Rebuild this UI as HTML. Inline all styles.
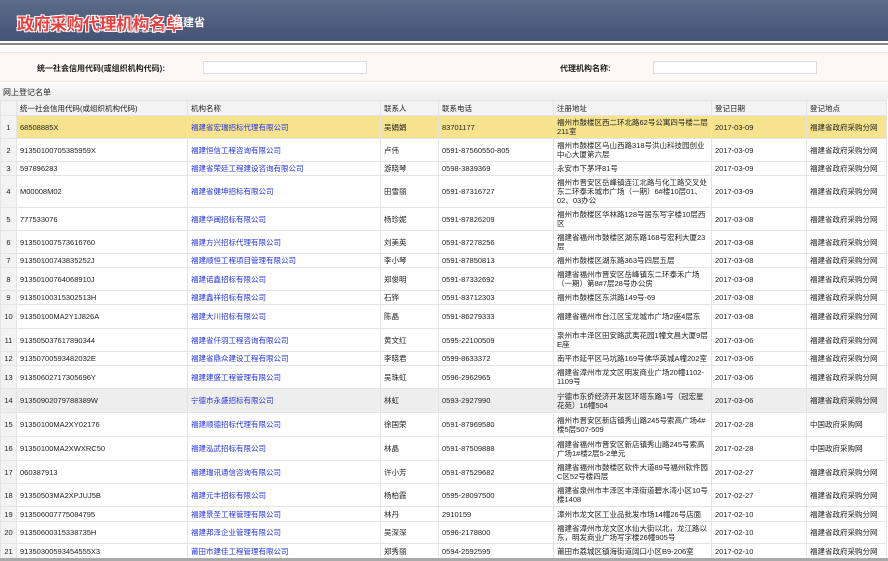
<!DOCTYPE html>
<html><head><meta charset="utf-8"><style>
*{margin:0;padding:0;box-sizing:border-box}
body{width:888px;height:561px;overflow:hidden;background:#fff;font-family:"Liberation Sans","Noto Sans CJK SC",sans-serif;font-size:7.5px;color:#222;position:relative}
.hdr{position:absolute;left:0;top:0;width:888px;height:41px;background:linear-gradient(#5d6b8a,#445274)}
.logo{position:absolute;left:17px;top:10px;font-size:17px;font-weight:bold;color:#e84040;letter-spacing:-0.5px;text-shadow:1px 1px 0 #fff,-1px -1px 0 #fff,1px -1px 0 #fff,-1px 1px 0 #fff}
.prov{position:absolute;left:172px;top:14px;font-size:11px;font-weight:bold;color:#fff}
.url{position:absolute;left:95px;top:28px;font-size:4px;color:#fff}
.line{position:absolute;left:0;top:43px;width:888px;height:2px;background:#888}
.search{position:absolute;left:0;top:52px;width:888px;height:30px;background:#fdf8f6;border-top:1px solid #f3e6e2;border-bottom:1px solid #f3e6e2}
.lbl{position:absolute;top:10px;font-weight:bold;font-size:8px}
.inp{position:absolute;top:8px;width:164px;height:13px;background:#fff;border:1px solid #ddd}
.cap{position:absolute;left:0;top:84px;width:888px;height:16px;background:linear-gradient(#fafafa,#eee);padding:3px 3px;font-size:8px}
table{position:absolute;left:0;top:100px;width:886px;border-collapse:collapse;table-layout:fixed}
td{border:1px solid #e4e4e4;padding:0 3px;vertical-align:middle;line-height:9px;overflow:hidden}
tr.h td{height:15px;background:#f3f3f3}
td.n{background:#f3f3f3;text-align:center;padding:0}
td a{color:#2233dd;text-decoration:none}
tr.y td{background:#f7e38e}
tr.y td.n{background:#f3f3f3}
tr.g td{background:#eee}
.bot{position:absolute;left:0;top:558px;width:888px;height:3px;background:#aaa}
</style></head><body>
<div class="hdr"><div class="logo">政府采购代理机构名单</div><div class="prov">福建省</div><div class="url">HTTP://WWW.CCGP.GOV.CN/AGENCY</div></div>
<div class="line"></div>
<div class="search"><span class="lbl" style="left:37px">统一社会信用代码(或组织机构代码):</span><div class="inp" style="left:203px"></div><span class="lbl" style="left:560px">代理机构名称:</span><div class="inp" style="left:653px"></div></div>
<div class="cap">网上登记名单</div>
<table>
<colgroup><col style="width:16px"><col style="width:171px"><col style="width:193px"><col style="width:58px"><col style="width:115px"><col style="width:158px"><col style="width:95px"><col style="width:80px"></colgroup>
<tr class="h"><td class="n"></td><td>统一社会信用代码(或组织机构代码)</td><td>机构名称</td><td>联系人</td><td>联系电话</td><td>注册地址</td><td>登记日期</td><td>登记地点</td></tr>
<tr class="y" style="height:23px"><td class="n">1</td><td>68508885X</td><td><a>福建省宏瑞招标代理有限公司</a></td><td>吴娟娟</td><td>83701177</td><td>福州市鼓楼区西二环北路62号公寓四号楼二层211室</td><td>2017-03-09</td><td>福建省政府采购分网</td></tr>
<tr style="height:23px"><td class="n">2</td><td>91350100705385959X</td><td><a>福建恒信工程咨询有限公司</a></td><td>卢伟</td><td>0591-87560550-805</td><td>福州市鼓楼区乌山西路318号洪山科技园创业中心大厦第六层</td><td>2017-03-09</td><td>福建省政府采购分网</td></tr>
<tr style="height:14px"><td class="n">3</td><td>597896283</td><td><a>福建省荣廷工程建设咨询有限公司</a></td><td>游晓琴</td><td>0598-3839369</td><td>永安市下茅坪81号</td><td>2017-03-09</td><td>福建省政府采购分网</td></tr>
<tr style="height:32px"><td class="n">4</td><td>M00008M02</td><td><a>福建省健坤招标有限公司</a></td><td>田雪丽</td><td>0591-87316727</td><td>福州市晋安区岳峰镇连江北路与化工路交叉处东二环泰禾城市广场（一期）6#楼10层01、02、03办公</td><td>2017-03-09</td><td>福建省政府采购分网</td></tr>
<tr style="height:23px"><td class="n">5</td><td>777533076</td><td><a>福建华闽招标有限公司</a></td><td>杨珍妮</td><td>0591-87826209</td><td>福州市鼓楼区华林路128号居东写字楼10层西区</td><td>2017-03-08</td><td>福建省政府采购分网</td></tr>
<tr style="height:23px"><td class="n">6</td><td>913501007573616760</td><td><a>福建方兴招标代理有限公司</a></td><td>刘美英</td><td>0591-87278256</td><td>福建省福州市鼓楼区湖东路168号宏利大厦23层</td><td>2017-03-08</td><td>福建省政府采购分网</td></tr>
<tr style="height:14px"><td class="n">7</td><td>91350100743835252J</td><td><a>福建顺恒工程项目管理有限公司</a></td><td>李小琴</td><td>0591-87850813</td><td>福州市鼓楼区湖东路363号四层五层</td><td>2017-03-08</td><td>福建省政府采购分网</td></tr>
<tr style="height:23px"><td class="n">8</td><td>91350100764068910J</td><td><a>福建诺鑫招标有限公司</a></td><td>郑俊明</td><td>0591-87332692</td><td>福建省福州市晋安区岳峰镇东二环泰禾广场（一期）第8#7层28号办公房</td><td>2017-03-08</td><td>福建省政府采购分网</td></tr>
<tr style="height:14px"><td class="n">9</td><td>91350100315302513H</td><td><a>福建鑫祥招标有限公司</a></td><td>石铧</td><td>0591-83712303</td><td>福州市鼓楼区东洪路149号-69</td><td>2017-03-08</td><td>福建省政府采购分网</td></tr>
<tr style="height:24px"><td class="n">10</td><td>91350100MA2Y1J826A</td><td><a>福建大川招标有限公司</a></td><td>陈晶</td><td>0591-86279333</td><td>福建省福州市台江区宝龙城市广场2座4层东</td><td>2017-03-08</td><td>福建省政府采购分网</td></tr>
<tr style="height:23px"><td class="n">11</td><td>913505037617890344</td><td><a>福建省仟羽工程咨询有限公司</a></td><td>黄文红</td><td>0595-22100509</td><td>泉州市丰泽区田安路武夷花园1幢文昌大厦9层E座</td><td>2017-03-06</td><td>福建省政府采购分网</td></tr>
<tr style="height:14px"><td class="n">12</td><td>91350700593482032E</td><td><a>福建省鼎众建设工程有限公司</a></td><td>李晓君</td><td>0599-8633372</td><td>南平市延平区马坑路169号佛华英城A幢202室</td><td>2017-03-06</td><td>福建省政府采购分网</td></tr>
<tr style="height:23px"><td class="n">13</td><td>91350602717305696Y</td><td><a>福建建盛工程管理有限公司</a></td><td>吴珠虹</td><td>0596-2962965</td><td>福建省漳州市龙文区明发商业广场20幢1102-1109号</td><td>2017-03-06</td><td>福建省政府采购分网</td></tr>
<tr class="g" style="height:24px"><td class="n">14</td><td>91350902079788389W</td><td><a>宁德市永盛招标有限公司</a></td><td>林虹</td><td>0593-2927990</td><td>宁德市东侨经济开发区环塔东路1号（冠宏星花苑）16幢504</td><td>2017-03-06</td><td>福建省政府采购分网</td></tr>
<tr style="height:24px"><td class="n">15</td><td>91350100MA2XY02176</td><td><a>福建顺德招标代理有限公司</a></td><td>徐国荣</td><td>0591-87969580</td><td>福州市晋安区新店镇秀山路245号索高广场4#楼5层507-509</td><td>2017-02-28</td><td>中国政府采购网</td></tr>
<tr style="height:24px"><td class="n">16</td><td>91350100MA2XWXRC50</td><td><a>福建泓武招标有限公司</a></td><td>林晶</td><td>0591-87509888</td><td>福建省福州市晋安区新店镇秀山路245号索高广场1#楼2层5-2单元</td><td>2017-02-28</td><td>中国政府采购网</td></tr>
<tr style="height:23px"><td class="n">17</td><td>060387913</td><td><a>福建瑞讯通信咨询有限公司</a></td><td>许小芳</td><td>0591-87529682</td><td>福建省福州市鼓楼区软件大道89号福州软件园C区52号楼四层</td><td>2017-02-27</td><td>福建省政府采购分网</td></tr>
<tr style="height:23px"><td class="n">18</td><td>91350503MA2XPJUJ5B</td><td><a>福建元丰招标有限公司</a></td><td>杨柏霞</td><td>0595-28097500</td><td>福建省泉州市丰泽区丰泽街道碧水湾小区10号楼1408</td><td>2017-02-27</td><td>福建省政府采购分网</td></tr>
<tr style="height:15px"><td class="n">19</td><td>913506007775084795</td><td><a>福建景圣工程管理有限公司</a></td><td>林丹</td><td>2910159</td><td>漳州市龙文区工业品批发市场14幢26号店面</td><td>2017-02-10</td><td>福建省政府采购分网</td></tr>
<tr style="height:22px"><td class="n">20</td><td>91350600315338735H</td><td><a>福建邦泽企业管理有限公司</a></td><td>吴深深</td><td>0596-2178800</td><td>福建省漳州市龙文区水仙大街以北，龙江路以东，明发商业广场写字楼26幢905号</td><td>2017-02-10</td><td>福建省政府采购分网</td></tr>
<tr style="height:15px"><td class="n">21</td><td>91350300593454555X3</td><td><a>莆田市建佳工程管理有限公司</a></td><td>郑秀丽</td><td>0594-2592595</td><td>莆田市荔城区镇海街道阔口小区B9-206室</td><td>2017-02-10</td><td>福建省政府采购分网</td></tr>
</table>
<div class="bot"></div>
</body></html>
